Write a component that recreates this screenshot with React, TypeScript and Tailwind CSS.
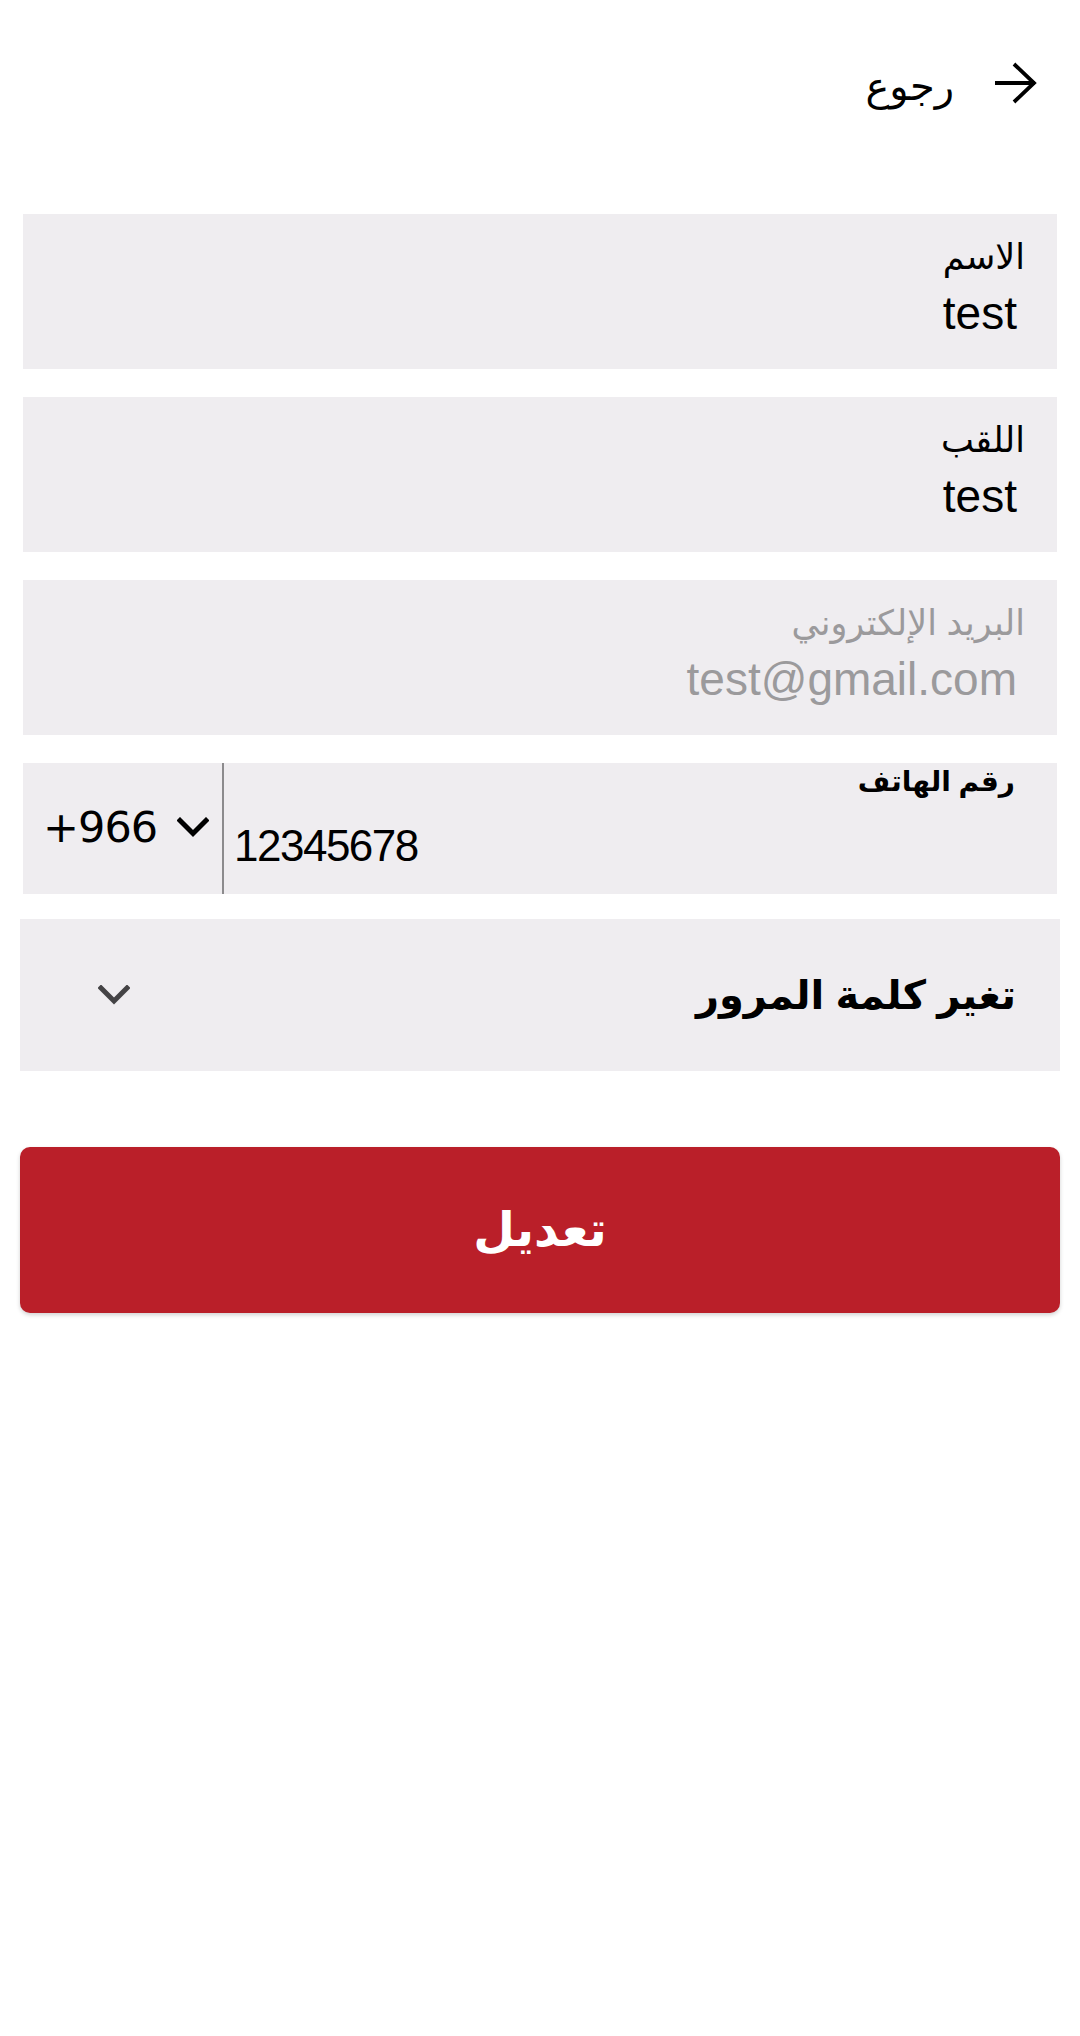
import React from "react";

const arabic = "font-['Liberation_Sans','DejaVu_Sans',sans-serif]";

function Chevron({ className }: { className?: string }) {
    return (
        <svg viewBox="0 0 32 20" className={className} fill="none" stroke="currentColor" strokeWidth="5" strokeLinecap="square">
            <path d="M3 3 L16 16 L29 3" />
        </svg>
    );
}

function Field({ label, value, muted }: { label: string; value: string; muted?: boolean }) {
    return (
        <div className="mx-[23px] h-[155px] bg-[#efedf0] pr-[32px] pt-[20px] flex flex-col items-start">
            <span className={`text-[35px] leading-[46px] ${muted ? "text-[#9b9a9c]" : "text-black"}`}>{label}</span>
            <span
                dir="ltr"
                className={`pr-[8px] mt-[6px] text-[46px] leading-[54px] font-['Liberation_Sans',sans-serif] ${muted ? "text-[#9b9a9c]" : "text-black"}`}
            >
                {value}
            </span>
        </div>
    );
}

export default function App() {
    return (
        <div dir="rtl" className={`w-[1080px] min-h-[2036px] bg-white ${arabic}`}>
            {/* header */}
            <div className="h-[214px] flex items-start pt-[62px] pr-[42px] gap-[40px]">
                <svg width="44" height="42" viewBox="0 0 44 42" fill="none" stroke="black" strokeWidth="3.8">
                    <path d="M1 21 H41" />
                    <path d="M20 2 L40 21 L20 40" />
                </svg>
                <span className="text-[40px] leading-[48px] text-black">رجوع</span>
            </div>

            <div className="flex flex-col gap-[28px]">
                <Field label="الاسم" value="test" />
                <Field label="اللقب" value="test" />
                <Field label="البريد الإلكتروني" value="test@gmail.com" muted />
            </div>

            {/* phone */}
            <div dir="ltr" className="mx-[23px] mt-[28px] h-[131px] bg-[#efedf0] flex">
                <div className="w-[201px] border-r-2 border-[#8c8b8d] flex items-center pl-[20px] pb-[2px] gap-[20px]">
                    <span dir="ltr" className="text-[43px] leading-none text-black font-['DejaVu_Sans',sans-serif] tracking-[-1px]">+966</span>
                    <Chevron className="w-[32px] h-[21px] text-black" />
                </div>
                <div className="flex-1 flex flex-col pl-[10px] pr-[42px]">
                    <span dir="rtl" className="self-end text-[28px] leading-[38px] font-semibold text-black">رقم الهاتف</span>
                    <span dir="ltr" className="mt-[19px] text-[44px] leading-[52px] text-black font-['Liberation_Sans',sans-serif] tracking-[-1.5px]">12345678</span>
                </div>
            </div>

            {/* change password */}
            <div className="mx-[20px] mt-[25px] h-[152px] bg-[#efedf0] flex items-center justify-between pr-[44px] pl-[78px]">
                <span className="text-[40px] font-bold text-black">تغير كلمة المرور</span>
                <Chevron className="w-[32px] h-[20px] text-[#444345]" />
            </div>

            {/* submit */}
            <button className="mx-[20px] mt-[76px] w-[1040px] h-[166px] rounded-[10px] bg-[#ba1f29] shadow-[0_2px_4px_rgba(0,0,0,0.18)] text-white text-[48px] font-bold flex items-center justify-center">
                تعديل
            </button>
        </div>
    );
}
